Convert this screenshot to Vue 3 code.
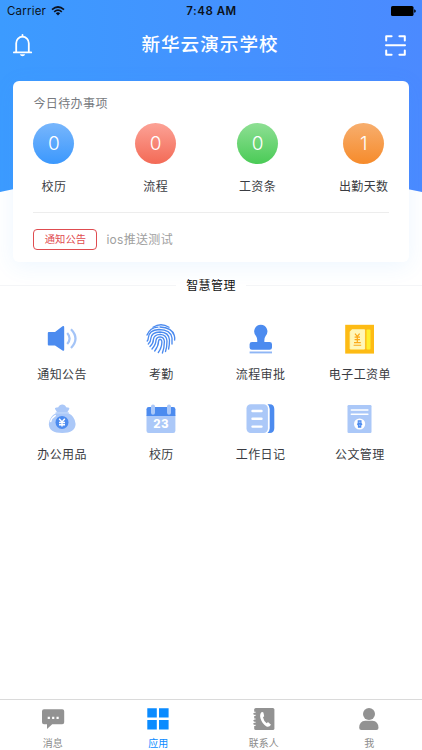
<script setup>
const todos = [
  { label: '校历', count: 0, tone: 'blue' },
  { label: '流程', count: 0, tone: 'red' },
  { label: '工资条', count: 0, tone: 'green' },
  { label: '出勤天数', count: 1, tone: 'orange' },
]
const apps = [
  { label: '通知公告', icon: 'speaker' },
  { label: '考勤', icon: 'finger' },
  { label: '流程审批', icon: 'stamp' },
  { label: '电子工资单', icon: 'payslip' },
  { label: '办公用品', icon: 'bag' },
  { label: '校历', icon: 'calendar' },
  { label: '工作日记', icon: 'diary' },
  { label: '公文管理', icon: 'doc' },
]
const tabs = [
  { label: '消息', icon: 'chat' },
  { label: '应用', icon: 'grid', active: true },
  { label: '联系人', icon: 'contacts' },
  { label: '我', icon: 'me' },
]
</script>

<template>
  <div class="page">
    <svg class="backdrop" viewBox="0 0 422 192" width="422" height="192">
      <defs>
        <linearGradient id="sky" x1="0" y1="0" x2="422" y2="0" gradientUnits="userSpaceOnUse">
          <stop offset="0" stop-color="#3c9bff" />
          <stop offset="1" stop-color="#4b8aff" />
        </linearGradient>
      </defs>
      <path d="M0 0H422V192Q211 144 0 192Z" fill="url(#sky)" />
    </svg>

    <div class="status">
      <div class="carrier">
        <span>Carrier</span>
        <svg width="14" height="10" viewBox="0 0 14 10" fill="none" stroke="#0b1220" stroke-width="1.7">
          <path d="M1 3.6Q7 -1.6 13 3.6" />
          <path d="M3.2 5.8Q7 2.6 10.8 5.8" />
          <path d="M4.8 7.2Q7 5.4 9.2 7.2L7 9.6Z" fill="#0b1220" stroke="none" />
        </svg>
      </div>
      <span class="time">7:48 AM</span>
      <svg class="battery" width="25" height="10" viewBox="0 0 25 10" fill="#000">
        <rect width="22.5" height="10" rx="1.6" />
        <path d="M23.2 3.2q1.6.4 1.6 1.8t-1.6 1.8z" />
      </svg>
    </div>

    <header class="navbar">
      <svg width="20" height="23" viewBox="0 0 20 23" fill="none" stroke="#fff" stroke-width="1.8" stroke-linecap="round">
        <path d="M3.2 18V9.2a6.3 6.6 0 0 1 12.6 0V18" />
        <path d="M.9 18.4H18.2" />
        <path d="M9.5 1V2.4" />
        <path d="M6.8 20.2H12.2Q11.5 22.2 9.5 22.2T6.8 20.2Z" fill="#fff" stroke="none" />
      </svg>
      <h1>新华云演示学校</h1>
      <svg width="21" height="21" viewBox="0 0 21 21" fill="none" stroke="#fff" stroke-width="2" stroke-linecap="round" stroke-linejoin="round">
        <path d="M1.2 5.6V1.2H6.6M14.4 1.2H19.8V5.6M1.2 15.4V19.8H6.6M14.4 19.8H19.8V15.4M1 10.3H20" />
      </svg>
    </header>

    <section class="card">
      <h2>今日待办事项</h2>
      <div class="todos">
        <div v-for="t in todos" :key="t.label" class="todo">
          <div class="bubble" :class="t.tone">{{ t.count }}</div>
          <span>{{ t.label }}</span>
        </div>
      </div>
      <div class="notice">
        <span class="tag">通知公告</span>
        <span class="notice-text">ios推送测试</span>
      </div>
    </section>

    <div class="divider"><span>智慧管理</span></div>

    <section class="apps">
      <div v-for="a in apps" :key="a.label" class="app">
        <svg v-if="a.icon === 'speaker'" width="30" height="30" viewBox="0 0 30 30">
          <path d="M1.8 8H8L15.5 2.3Q17.2 1.5 17.2 3.3V25.7Q17.2 27.5 15.5 26.5L8 21.5H1.8Q.8 21.5.8 20.5V9Q.8 8 1.8 8Z" fill="#4c8bef" />
          <path d="M20.2 9Q25 14.5 20.2 20M24 5.2Q33 14.5 24 24" fill="none" stroke="#a4c4f7" stroke-width="2.2" />
        </svg>
        <svg v-else-if="a.icon === 'finger'" width="30" height="30" viewBox="0 0 30 30" fill="none" stroke="#4c8bef" stroke-width="1.35" stroke-linecap="round">
          <path d="M7 3.2Q15-1.8 23 3.2" />
          <path d="M1 11Q4 3.5 12 3.1M14 3Q26 3.5 28.3 11.5Q29 14 28.6 16" />
          <path d="M1.2 17Q2.2 16 2.2 14.5Q2.4 6 13 5.5Q25 5.8 26 14V20" />
          <path d="M2.3 20Q4.8 18 4.8 14.5Q5.3 8.2 14 8Q23 8.3 23.5 16Q23.5 21 22.6 25" />
          <path d="M4 22.5Q7.4 19.5 7.4 15.5Q8 10.4 14.3 10.3Q20.7 10.8 21 17Q21 23 19.5 27.5" />
          <path d="M6 25Q10 20.5 10 16.3Q10.5 12.8 14.3 12.8Q18.2 13.2 18.4 17.5Q18.3 24 16.4 29" />
          <path d="M8.7 27Q12.5 22 12.6 17Q13 15.2 14.4 15.3Q16 15.7 15.9 18Q15.7 24 12.3 28.5" />
        </svg>
        <svg v-else-if="a.icon === 'stamp'" width="30" height="30" viewBox="0 0 30 30" fill="#4c8bef">
          <path d="M14.8.8a6.6 6.6 0 0 1 4.8 11.1q-1.6 2-1.2 6h5.2q2.4 0 2.4 2.4v3.2q0 2.2-2.4 2.2H6q-2.4 0-2.4-2.2v-3.2q0-2.4 2.4-2.4h5.2q.4-4-1.2-6A6.6 6.6 0 0 1 14.8.8Z" />
          <rect x="3.6" y="27.5" width="22.4" height="1.9" fill="#8fb6f5" />
        </svg>
        <svg v-else-if="a.icon === 'payslip'" width="30" height="30" viewBox="0 0 30 30">
          <rect x=".2" y=".8" width="28.8" height="28.8" fill="#fdbb14" />
          <path d="M7 5.8H19.6V25H5.2V7.6Z" fill="#fff7b8" stroke="#fff7b8" stroke-width="1" stroke-linejoin="round" />
          <rect x="21.5" y="5.4" width="4" height="20" rx="1" fill="#ffee2e" />
          <path d="M10 9.6 12.3 12.6 14.6 9.6M12.3 12.6V18M9.6 13.2H15M9.6 15.6H15" fill="none" stroke="#fba919" stroke-width="1.2" />
          <path d="M9 18.6H15.8M8.6 21.2H16.2" fill="none" stroke="#fba919" stroke-width="1.1" />
        </svg>
        <svg v-else-if="a.icon === 'bag'" width="30" height="30" viewBox="0 0 30 30">
          <path d="M10.2 8.5 8.2 5.2Q7.4 3.5 9.5 3.5Q11.5 3.8 12 2Q13 .4 15.3.5Q17.6.4 18.5 2Q19 3.8 21 3.5Q23 3.6 22 5.4L20.2 8.5Q28.2 12.3 28.6 20Q28.2 29 15.2 29Q2 29 1.8 20Q2.2 12.3 10.2 8.5Z" fill="#abc8f8" />
          <path d="M8.6 8.9H21.8" stroke="#bfd6fb" stroke-width="1.5" />
          <path d="M3.7 17.5Q4.4 13.8 8.3 11.6" fill="none" stroke="#fff" stroke-width="1.4" stroke-linecap="round" />
          <circle cx="15" cy="18.4" r="6.5" fill="#4c8bef" />
          <path d="M12.2 14.8 15 18 17.8 14.8M15 18V22.6M12 18.5H18M12 20.7H18" fill="none" stroke="#fff" stroke-width="1.4" />
        </svg>
        <svg v-else-if="a.icon === 'calendar'" width="30" height="30" viewBox="0 0 30 30">
          <path d="M.5 11H29.4V26.8Q29.4 29 27.2 29H2.7Q.5 29 .5 26.8Z" fill="#abc8f8" />
          <path d="M.5 12V5.2Q.5 3 2.7 3H27.2Q29.4 3 29.4 5.2V12Z" fill="#4c8bef" />
          <path d="M7 2.6V8.8M23 2.6V8.8" stroke="#abc8f8" stroke-width="4" stroke-linecap="round" />
          <text x="15.2" y="24" text-anchor="middle" fill="#fff" class="day">23</text>
        </svg>
        <svg v-else-if="a.icon === 'diary'" width="30" height="30" viewBox="0 0 30 30">
          <path d="M21.5.3H23.7Q28.3.3 28.3 5V24.2Q28.3 28.9 23.7 28.9H21.5Q23.7 27 23.7 24.2V5Q23.7 2 21.5.3Z" fill="#4c8bef" />
          <rect x=".5" y=".3" width="21.4" height="28.6" rx="4.2" fill="#abc8f8" />
          <path d="M6.5 7H15.5M6.5 14.8H15.5M6.5 22.6H15.5" stroke="#fff" stroke-width="2.4" stroke-linecap="round" />
        </svg>
        <svg v-else width="30" height="30" viewBox="0 0 30 30">
          <rect x="2.5" y="1" width="24" height="28" rx="1.2" fill="#abc8f8" />
          <path d="M6.3 6H22.9M6.3 10.3H22.9" stroke="#fff" stroke-width="1.5" stroke-linecap="round" />
          <circle cx="14.6" cy="20" r="5.6" fill="#fff" />
          <path d="M12.7 16.2H16.5V19L17.5 20.2 16.3 21.4V23.8H12.9V21.4L11.9 20.2 12.7 19Z" fill="#4c8bef" />
          <path d="M13.7 18.2H15.5M14.1 21.2H15.3" stroke="#b9d2fa" stroke-width="1" />
        </svg>
        <span>{{ a.label }}</span>
      </div>
    </section>

    <nav class="tabbar">
      <div v-for="t in tabs" :key="t.label" class="tab" :class="{ active: t.active }">
        <svg v-if="t.icon === 'chat'" width="24" height="24" viewBox="0 0 24 24" fill="#929292">
          <path d="M3 2.3H21.2Q23.2 2.3 23.2 4.3V15.3Q23.2 17.3 21.2 17.3H11.2L6 22V17.3H3Q1 17.3 1 15.3V4.3Q1 2.3 3 2.3Z" />
          <path d="M6.7 9.7h2.2v2.2H6.7zM11.1 9.7h2.2v2.2h-2.2zM15.5 9.7h2.2v2.2h-2.2z" fill="#fff" />
        </svg>
        <svg v-else-if="t.icon === 'grid'" width="24" height="24" viewBox="0 0 24 24" fill="#0a8bff">
          <path d="M1.3 1.2H10.8V10.6H1.3zM13 1.2H22.6V10.6H13zM1.3 13H10.8V22.6H1.3zM13 13H22.6V22.6H13z" />
        </svg>
        <svg v-else-if="t.icon === 'contacts'" width="24" height="24" viewBox="0 0 24 24">
          <rect x="2.2" y="1" width="20.2" height="22" rx="1.6" fill="#929292" />
          <path d="M1.4 5.2H3.6M1.4 8.4H3.6M1.4 12H3.6M1.4 15.2H3.6M1.4 18.4H3.6" stroke="#fff" stroke-width="1.1" />
          <path d="M1.4 6.8H3M1.4 13.6H3M1.4 16.8H3" stroke="#929292" stroke-width="1.4" />
          <path d="M9.4 5.2Q7.4 7.4 8.5 11.4Q10.3 17 14.5 19.4Q17.2 20.4 19 17.8L16.2 15.2Q15.2 15.3 14.7 16.2Q11.6 13.8 11 10.2L12.2 9.2 11.4 5.4Q10.4 4.6 9.4 5.2Z" fill="#fff" />
        </svg>
        <svg v-else width="24" height="24" viewBox="0 0 24 24" fill="#929292">
          <circle cx="12" cy="6.9" r="6" />
          <path d="M2.2 20.8Q2.3 14.1 8.2 13.8H15.5Q21.2 14.1 21.5 20.8Q21.5 23 19.3 23H4.4Q2.2 23 2.2 20.8Z" />
        </svg>
        <span>{{ t.label }}</span>
      </div>
    </nav>
  </div>
</template>

<style>
body { background: #fff; }
</style>

<style scoped>
.page {
  position: relative;
  box-sizing: border-box;
  width: 422px;
  height: 750px;
  display: flex;
  flex-direction: column;
  overflow: hidden;
  background: #fff;
  color: #3a3c42;
  font-family: Inter, "Noto Sans CJK SC", sans-serif;
  font-size: 12px;
}
svg { display: block; }
.backdrop { position: absolute; left: 0; top: 0; }
.status, .navbar, .card, .divider { position: relative; }
.status {
  height: 21px;
  padding: 0 6px 0 7px;
  display: grid;
  grid-template-columns: 1fr auto 1fr;
  align-items: center;
  color: #0b1220;
}
.carrier { display: flex; align-items: center; gap: 5px; font-size: 11.5px; letter-spacing: .2px; }
.carrier span { padding-top: 1px; line-height: 20px; }
.time { padding-top: 1px; line-height: 20px; font-weight: 600; font-size: 11.5px; letter-spacing: .5px; }
.battery { justify-self: end; }
.navbar {
  height: 60px;
  box-sizing: border-box;
  padding: 0 16px 11px 13px;
  display: flex;
  align-items: center;
  justify-content: space-between;
}
h1 { margin: 0 0 3px 2px; color: #fff; font-size: 18.6px; line-height: 28px; font-weight: 500; letter-spacing: 1px; }
.card {
  height: 181px;
  margin: 0 13px;
  box-sizing: border-box;
  padding: 13px 20.5px 0 20.4px;
  border-radius: 6px;
  background: #fff;
  box-shadow: 0 4px 22px rgba(60, 150, 255, .09);
}
h2 { margin: 0; color: #777a80; font-size: 12px; font-weight: 400; letter-spacing: .4px; line-height: 20px; }
.todos { margin-top: 9px; display: flex; justify-content: space-between; }
.todo { min-width: 41px; display: flex; flex-direction: column; align-items: center; gap: 13px; }
.todo span { letter-spacing: .4px; line-height: 20px; }
.bubble {
  width: 41px;
  height: 41px;
  border-radius: 50%;
  color: #fff;
  font: 300 19px/41px Inter, sans-serif;
  text-align: center;
}
.blue { background: linear-gradient(#78b6fc, #3b98fd); }
.red { background: linear-gradient(#fca296, #f36a56); }
.green { background: linear-gradient(#8edf94, #4acb56); }
.orange { background: linear-gradient(#f7ae6e, #f68b2b); }
.notice {
  margin-top: 15px;
  padding-top: 16px;
  border-top: 1px solid #ededed;
  display: flex;
  align-items: center;
  gap: 9px;
}
.tag {
  box-sizing: border-box;
  width: 64px;
  height: 21px;
  border: 1px solid #df4c50;
  border-radius: 4px;
  color: #df4c50;
  font-size: 10.3px;
  line-height: 19px;
  text-align: center;
}
.notice-text { color: #a0a0a0; letter-spacing: .3px; line-height: 20px; }
.divider {
  height: 20px;
  margin-top: 13px;
  display: flex;
  align-items: center;
  gap: 10px;
  color: #111;
  letter-spacing: .4px;
}
.divider span { padding-top: 2px; line-height: 20px; }
.divider::before, .divider::after { content: ""; flex: 1; height: 1px; background: #f4f5f7; }
.apps {
  margin: 29px 12.5px 0;
  display: grid;
  grid-template-columns: repeat(4, 1fr);
  row-gap: 19px;
}
.app { display: flex; flex-direction: column; align-items: center; gap: 11px; }
.app span { line-height: 20px; letter-spacing: .4px; white-space: nowrap; }
.day { font: 800 11.5px Inter, sans-serif; letter-spacing: .6px; }
.tabbar {
  height: 51px;
  box-sizing: border-box;
  margin-top: auto;
  border-top: 1px solid #dadada;
  display: grid;
  grid-template-columns: repeat(4, 1fr);
}
.tab {
  padding-top: 7px;
  display: flex;
  flex-direction: column;
  align-items: center;
  gap: 5px;
  color: #8c8c8c;
  font-size: 10px;
  line-height: 14px;
}
.tab.active { color: #0a8bff; }
</style>
